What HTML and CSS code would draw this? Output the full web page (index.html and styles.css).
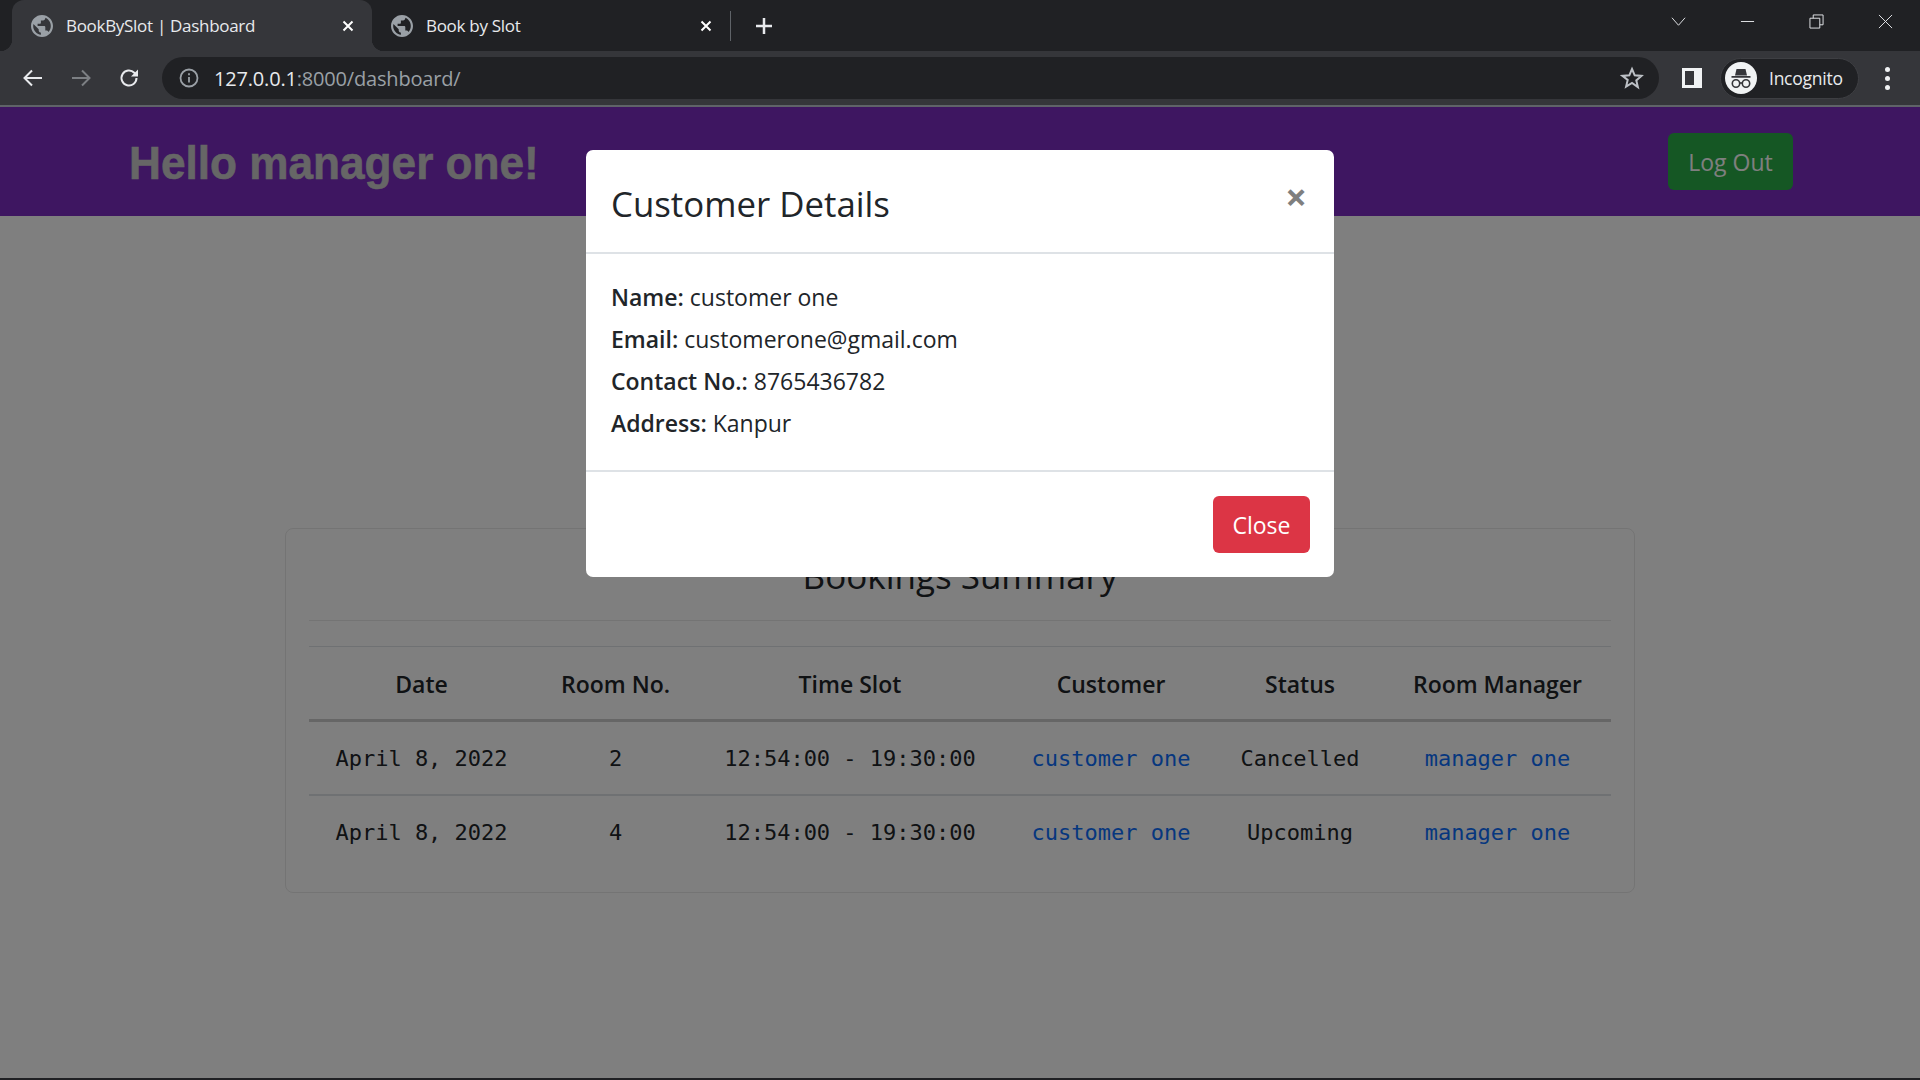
FILE: index.html
```html
<!DOCTYPE html>
<html lang="en">
<head>
    <meta charset="UTF-8">
    <title>BookBySlot | Dashboard</title>
    <link rel="stylesheet" href="styles.css">
</head>
<body>
    <!-- Browser chrome -->
    <div class="tabstrip">
        <div class="tab tab-active">
            <svg class="globe" viewBox="2 2 20 20"><path d="M12 2C6.48 2 2 6.48 2 12s4.48 10 10 10 10-4.48 10-10S17.52 2 12 2zm-1 17.93c-3.95-.49-7-3.85-7-7.93 0-.62.08-1.21.21-1.79L9 15v1c0 1.1.9 2 2 2v1.93zm6.9-2.54c-.26-.81-1-1.39-1.9-1.39h-1v-3c0-.55-.45-1-1-1H8v-2h2c.55 0 1-.45 1-1V7h2c1.1 0 2-.9 2-2v-.41c2.93 1.19 5 4.06 5 7.41 0 2.08-.8 3.97-2.1 5.39z"/></svg>
            <span class="tab-title">BookBySlot | Dashboard</span>
            <svg class="tab-close" viewBox="0 0 12 12"><path d="M1.5 1.5l9 9M10.5 1.5l-9 9"/></svg>
        </div>
        <div class="tab">
            <svg class="globe" viewBox="2 2 20 20"><path d="M12 2C6.48 2 2 6.48 2 12s4.48 10 10 10 10-4.48 10-10S17.52 2 12 2zm-1 17.93c-3.95-.49-7-3.85-7-7.93 0-.62.08-1.21.21-1.79L9 15v1c0 1.1.9 2 2 2v1.93zm6.9-2.54c-.26-.81-1-1.39-1.9-1.39h-1v-3c0-.55-.45-1-1-1H8v-2h2c.55 0 1-.45 1-1V7h2c1.1 0 2-.9 2-2v-.41c2.93 1.19 5 4.06 5 7.41 0 2.08-.8 3.97-2.1 5.39z"/></svg>
            <span class="tab-title">Book by Slot</span>
            <svg class="tab-close" viewBox="0 0 12 12"><path d="M1.5 1.5l9 9M10.5 1.5l-9 9"/></svg>
        </div>
        <div class="tab-sep"></div>
        <svg class="new-tab" viewBox="0 0 18 18"><path d="M9 1v16M1 9h16"/></svg>
        <div class="window-btns">
            <svg class="win-icon" viewBox="0 0 16 10"><path d="M1 1l7 8 7-8"/></svg>
            <svg class="win-icon" viewBox="0 0 16 10"><path d="M1 5h14"/></svg>
            <svg class="win-icon" viewBox="0 0 16 16"><path d="M1 4.500h10.500v10.500h-10.500zM4.500 4.500v-3.500h10.500v10.500h-3.500"/></svg>
            <svg class="win-icon" viewBox="0 0 16 16"><path d="M1 1l14 14M15 1l-14 14"/></svg>
        </div>
    </div>
    <div class="toolbar">
        <svg class="nav-icon" viewBox="0 0 24 24"><path d="M21 12H4M11 4.500L3.500 12l7.500 7.500"/></svg>
        <svg class="nav-icon nav-off" viewBox="0 0 24 24"><path d="M3 12h17M13 4.500l7.500 7.500-7.500 7.500"/></svg>
        <svg class="nav-icon" viewBox="0 0 24 24"><path d="M19.500 12a7.500 7.500 0 1 1-2.200-5.300L20 9.400"/><path class="fill" d="M21 3.500v7h-7z"/></svg>
        <div class="omnibox">
            <svg class="info" viewBox="0 0 20 20"><circle cx="10" cy="10" r="8.500"/><path d="M10 9v5.500M10 5.200v2"/></svg>
            <span class="url"><span class="url-host">127.0.0.1</span>:8000/dashboard/</span>
            <svg class="star" viewBox="0 0 24 24"><path d="M12 3l2.700 6.300 6.800.6-5.200 4.500 1.600 6.700L12 17l-5.900 3.600 1.600-6.700L2.500 9.900l6.800-.6z"/></svg>
        </div>
        <div class="side-panel"></div>
        <div class="profile">
            <svg class="incognito" viewBox="0 0 32 32">
                <circle cx="16" cy="16" r="16" fill="#f1f3f4"/>
                <path fill="#35363a" d="M11.500 7h9l1.500 6.500h-12zM6.500 14h19v1.800h-19z"/>
                <circle cx="11" cy="21.500" r="3.700" fill="none" stroke="#35363a" stroke-width="1.600"/>
                <circle cx="21" cy="21.500" r="3.700" fill="none" stroke="#35363a" stroke-width="1.600"/>
                <path d="M14.500 21h3" stroke="#35363a" stroke-width="1.600"/>
            </svg>
            <span class="profile-name">Incognito</span>
        </div>
        <div class="menu-dots"><i></i><i></i><i></i></div>
    </div>
    <div class="toolbar-line"></div>

    <!-- Page -->
    <div class="page">
        <header class="site-header">
            <h1>Hello manager one!</h1>
            <a class="btn btn-logout" href="#">Log Out</a>
        </header>
        <main class="card">
            <h3>Bookings Summary</h3>
            <hr>
            <table>
                <colgroup>
                    <col class="col-date">
                    <col class="col-room">
                    <col class="col-slot">
                    <col class="col-customer">
                    <col class="col-status">
                    <col class="col-manager">
                </colgroup>
                <thead>
                    <tr>
                        <th>Date</th>
                        <th>Room No.</th>
                        <th>Time Slot</th>
                        <th>Customer</th>
                        <th>Status</th>
                        <th>Room Manager</th>
                    </tr>
                </thead>
                <tbody>
                    <tr>
                        <td>April 8, 2022</td>
                        <td>2</td>
                        <td>12:54:00 - 19:30:00</td>
                        <td><a href="#">customer one</a></td>
                        <td>Cancelled</td>
                        <td><a href="#">manager one</a></td>
                    </tr>
                    <tr>
                        <td>April 8, 2022</td>
                        <td>4</td>
                        <td>12:54:00 - 19:30:00</td>
                        <td><a href="#">customer one</a></td>
                        <td>Upcoming</td>
                        <td><a href="#">manager one</a></td>
                    </tr>
                </tbody>
            </table>
        </main>
        <div class="backdrop"></div>
        <div class="modal">
            <div class="modal-header">
                <h5>Customer Details</h5>
                <span class="modal-x">&times;</span>
            </div>
            <div class="modal-body">
                <p><b>Name:</b> customer one</p>
                <p><b>Email:</b> customerone@gmail.com</p>
                <p><b>Contact No.:</b> 8765436782</p>
                <p><b>Address:</b> Kanpur</p>
            </div>
            <div class="modal-footer">
                <button class="btn btn-close">Close</button>
            </div>
        </div>
    </div>
    <div class="bottom-edge"></div>
</body>
</html>
```

FILE: styles.css
```css
* {
    box-sizing: border-box;
}
body {
    margin: 0;
    height: 100vh;
    display: flex;
    flex-direction: column;
    overflow: hidden;
    background-color: #202124;
    font-family: "Open Sans", "Noto Sans", sans-serif;
    color: #212529;
}

/* browser chrome */
.tabstrip {
    height: 51px;
    flex: none;
    display: flex;
    align-items: center;
    padding-left: 12px;
    background-color: #202124;
    color: #e8eaed;
}
.tab {
    position: relative;
    width: 360px;
    height: 51px;
    flex: none;
    display: flex;
    align-items: center;
    padding: 0 18px 0 19px;
}
.tab-active {
    background-color: #35363a;
    border-radius: 12px 12px 0 0;
}
.tab-active::before,
.tab-active::after {
    content: "";
    position: absolute;
    bottom: 0;
    width: 12px;
    height: 12px;
}
.tab-active::before {
    left: -12px;
    background: radial-gradient(circle at 0 0, #202124 12px, #35363a 12.5px);
}
.tab-active::after {
    right: -12px;
    background: radial-gradient(circle at 100% 0, #202124 12px, #35363a 12.5px);
}
.globe {
    width: 22px;
    height: 22px;
    flex: none;
    fill: #9aa0a6;
}
.tab-title {
    flex: 1;
    margin-left: 13px;
    font-size: 17px;
    letter-spacing: -0.3px;
    white-space: nowrap;
}
.tab-close {
    width: 12px;
    height: 12px;
    flex: none;
    fill: none;
    stroke: #fff;
    stroke-width: 2;
}
.tab + .tab {
    width: 358px;
}
.tab-sep {
    width: 1px;
    height: 30px;
    background-color: #5f6368;
}
.new-tab {
    width: 18px;
    height: 18px;
    margin-left: 24px;
    fill: none;
    stroke: #e8eaed;
    stroke-width: 2.5;
}
.window-btns {
    margin-left: auto;
    display: flex;
    align-items: center;
    align-self: flex-start;
    height: 43px;
    gap: 54px;
    padding-right: 27px;
}
.win-icon {
    width: 15px;
    height: 15px;
    fill: none;
    stroke: #e8eaed;
    stroke-width: 1;
}

.toolbar {
    height: 54px;
    flex: none;
    display: flex;
    align-items: center;
    padding-left: 21px;
    background-color: #35363a;
}
.nav-icon {
    width: 24px;
    height: 24px;
    margin-right: 24px;
    flex: none;
    fill: none;
    stroke: #e8eaed;
    stroke-width: 2;
}
.nav-icon .fill {
    fill: #e8eaed;
    stroke: none;
}
.nav-off {
    stroke: #7c7f83;
}
.omnibox {
    width: 1497px;
    height: 42px;
    margin-left: -3px;
    flex: none;
    display: flex;
    align-items: center;
    padding: 0 15px 0 17px;
    border-radius: 21px;
    background-color: #202124;
}
.info {
    width: 20px;
    height: 20px;
    flex: none;
    fill: none;
    stroke: #9aa0a6;
    stroke-width: 1.8;
}
.url {
    flex: 1;
    margin-left: 15px;
    font-size: 20px;
    letter-spacing: -0.18px;
    color: #9aa0a6;
}
.url-host {
    color: #e8eaed;
}
.star {
    width: 24px;
    height: 24px;
    fill: none;
    stroke: #bdc1c6;
    stroke-width: 2;
}
.side-panel {
    width: 20px;
    height: 20px;
    margin-left: 23px;
    flex: none;
    border: 3px solid #f1f3f4;
    border-right-width: 8px;
    background-color: #35363a;
}
.profile {
    width: 139px;
    height: 41px;
    margin-left: 18px;
    flex: none;
    display: flex;
    align-items: center;
    padding-left: 4px;
    border-radius: 21px;
    border: 1px solid #3e3f43;
    background-color: #202124;
}
.incognito {
    width: 32px;
    height: 32px;
    flex: none;
}
.profile-name {
    margin-left: 12px;
    font-size: 17.5px;
    letter-spacing: -0.25px;
    color: #e8eaed;
}
.menu-dots {
    margin-left: 26px;
    display: flex;
    flex-direction: column;
    gap: 4px;
}
.menu-dots i {
    width: 5px;
    height: 5px;
    border-radius: 50%;
    background-color: #f1f3f4;
}
.toolbar-line {
    height: 2px;
    flex: none;
    background-color: #5f6368;
}

/* page */
.page {
    flex: 1;
    min-height: 0;
    background-color: #fff;
}
.bottom-edge {
    height: 2px;
    flex: none;
    background-color: #202124;
}
.site-header {
    height: 109px;
    display: flex;
    align-items: center;
    justify-content: space-between;
    padding: 0 127px 0 129px;
    background-color: #7c2cc2;
}
.site-header h1 {
    margin: 2px 0 0;
    font-family: "Liberation Sans", sans-serif;
    font-size: 46px;
    font-weight: bold;
    color: #ccc;
    -webkit-text-stroke: 0.6px #ccc;
    transform: scaleX(0.96);
    transform-origin: left center;
}
.btn {
    display: inline-flex;
    align-items: center;
    justify-content: center;
    height: 57px;
    border: none;
    border-radius: 6px;
    font-family: inherit;
    font-size: 23px;
    color: #fff;
    text-decoration: none;
}
.btn-logout {
    width: 125px;
    background-color: #2aae48;
}
.card {
    width: 1350px;
    height: 365px;
    margin: 312px auto 0;
    padding: 0 23px;
    border: 1px solid #e8e8e8;
    border-radius: 8px;
}
.card h3 {
    margin: 0;
    height: 91px;
    padding-top: 24px;
    text-align: center;
    font-size: 35px;
    font-weight: 400;
    line-height: 46px;
}
hr {
    height: 1px;
    margin: 0 0 25px;
    border: none;
    background-color: #e8e8e8;
}
table {
    width: 100%;
    table-layout: fixed;
    border-collapse: collapse;
    text-align: center;
}
.col-date { width: 225px; }
.col-room { width: 163px; }
.col-slot { width: 306px; }
.col-customer { width: 216px; }
.col-status { width: 162px; }
.col-manager { width: 230px; }
th {
    height: 74px;
    padding: 2px 0 0;
    border-top: 1px solid #dee2e6;
    border-bottom: 3px solid #ccc;
    font-size: 23px;
    font-weight: 600;
}
td {
    height: 74px;
    padding: 1px 0 0;
    font-family: "DejaVu Sans Mono", monospace;
    font-size: 22px;
}
th:last-child,
td:last-child {
    padding-left: 3px;
}
tbody tr:first-child td {
    border-bottom: 2px solid #dee2e6;
}
td a {
    color: #0d6efd;
    text-decoration: none;
}

/* modal */
.backdrop {
    position: fixed;
    left: 0;
    right: 0;
    top: 107px;
    bottom: 2px;
    background-color: rgba(0, 0, 0, 0.5);
}
.modal {
    position: fixed;
    left: 586px;
    top: 150px;
    width: 748px;
    height: 427px;
    display: flex;
    flex-direction: column;
    border-radius: 7px;
    background-color: #fff;
}
.modal-header {
    position: relative;
    height: 104px;
    flex: none;
    padding: 0 25px;
    border-bottom: 2px solid #dee2e6;
}
.modal-header h5 {
    margin: 0;
    padding-top: 31px;
    font-size: 34.8px;
    font-weight: 400;
    line-height: 46px;
}
.modal-x {
    position: absolute;
    right: 27px;
    top: 21px;
    font-size: 38px;
    font-weight: 700;
    line-height: 50px;
    color: #7f7f7f;
}
.modal-body {
    height: 218px;
    flex: none;
    padding: 22px 25px 0;
    border-bottom: 2px solid #dee2e6;
    font-size: 23px;
}
.modal-body p {
    margin: 0;
    height: 42px;
    line-height: 42px;
}
.modal-body b {
    font-weight: 600;
}
.modal-footer {
    flex: 1;
    display: flex;
    justify-content: flex-end;
    align-items: flex-start;
    padding: 24px 24px 0;
}
.btn-close {
    width: 97px;
    background-color: #dc3545;
}
```
